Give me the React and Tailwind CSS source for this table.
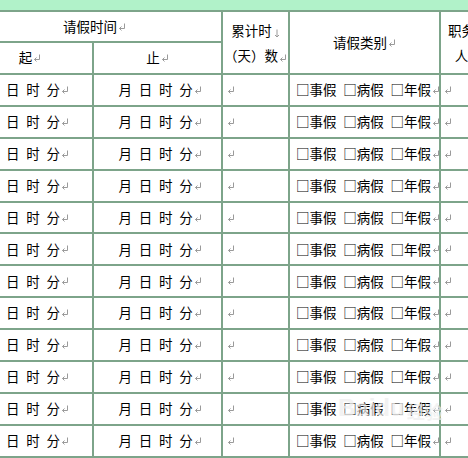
import React from 'react';

const sp = '\u2002';

// Word-style paragraph mark
const Mark = () => (
  <svg width="8" height="8" viewBox="0 0 8 8" className="inline-block shrink-0 ml-[1px] align-[-1px]">
    <path d="M6.5 0.5 V5.5 H1.5" fill="none" stroke="#9a9a9a" strokeWidth="1" />
    <path d="M3.5 3.5 L1.5 5.5 L3.5 7.5" fill="none" stroke="#9a9a9a" strokeWidth="1" />
  </svg>
);

// manual line break arrow
const BreakMark = () => (
  <svg width="6" height="9" viewBox="0 0 6 9" className="inline-block ml-[2px] align-[-2px]">
    <path d="M3 0.5 V8" fill="none" stroke="#9a9a9a" strokeWidth="1" />
    <path d="M1 6 L3 8 L5 6" fill="none" stroke="#9a9a9a" strokeWidth="1" />
  </svg>
);

const rows = Array.from({ length: 12 }, (_, i) => i);

export default function App() {
  return (
    <div
      className="relative w-[468px] h-[458px] overflow-hidden bg-white text-black text-[13.5px] leading-none whitespace-nowrap"
      style={{ fontFamily: '"Noto Sans CJK SC", "Noto Sans", sans-serif' }}
    >
      <div className="h-[10px] bg-[#b1f2c9]" />
      <div className="ml-[-32px] w-[500px] grid grid-cols-[124px_127px_65px_149px_41px] grid-rows-[29px_30px_repeat(12,29.9px)] gap-[2px] bg-[#7da48a] border-t-2 border-b-2 border-[#7da48a]">
        <div className="col-span-2 bg-white flex items-center justify-center">
          请假时间<Mark />
        </div>
        <div className="row-span-2 bg-white flex flex-col justify-center items-center leading-[25px]">
          <div>累计时<BreakMark /></div>
          <div>（天）数<Mark /></div>
        </div>
        <div className="row-span-2 bg-white flex items-center justify-center">
          请假类别<Mark />
        </div>
        <div className="row-span-2 bg-white flex flex-col justify-center items-center leading-[25px]">
          <div>职务</div>
          <div>人</div>
        </div>
        <div className="bg-white flex items-center justify-center">
          起<Mark />
        </div>
        <div className="bg-white flex items-center justify-center">
          止<Mark />
        </div>

        {rows.map((i) => (
          <React.Fragment key={i}>
            <div className="bg-white flex items-center pl-[38px]">
              日{sp}时{sp}分<Mark />
            </div>
            <div className="bg-white flex items-center justify-center pl-[5px]">
              月{sp}日{sp}时{sp}分<Mark />
            </div>
            <div className="bg-white flex items-center pl-[3px]">
              <Mark />
            </div>
            <div className="bg-white flex items-center pl-[6px]">
              □事假{sp}□病假{sp}□年假<Mark />
            </div>
            <div className="bg-white flex items-center pl-[2px]">
              <Mark />
            </div>
          </React.Fragment>
        ))}
      </div>

      {/* watermark */}
      <div className="absolute left-[338px] top-[396px] flex items-end text-[24px] font-bold text-[#ededed] opacity-70 leading-none pointer-events-none">
        <span style={{ fontFamily: '"Liberation Sans", sans-serif' }}>Baidu</span>
        <span className="text-[18px] ml-[2px]">经验</span>
      </div>
    </div>
  );
}
